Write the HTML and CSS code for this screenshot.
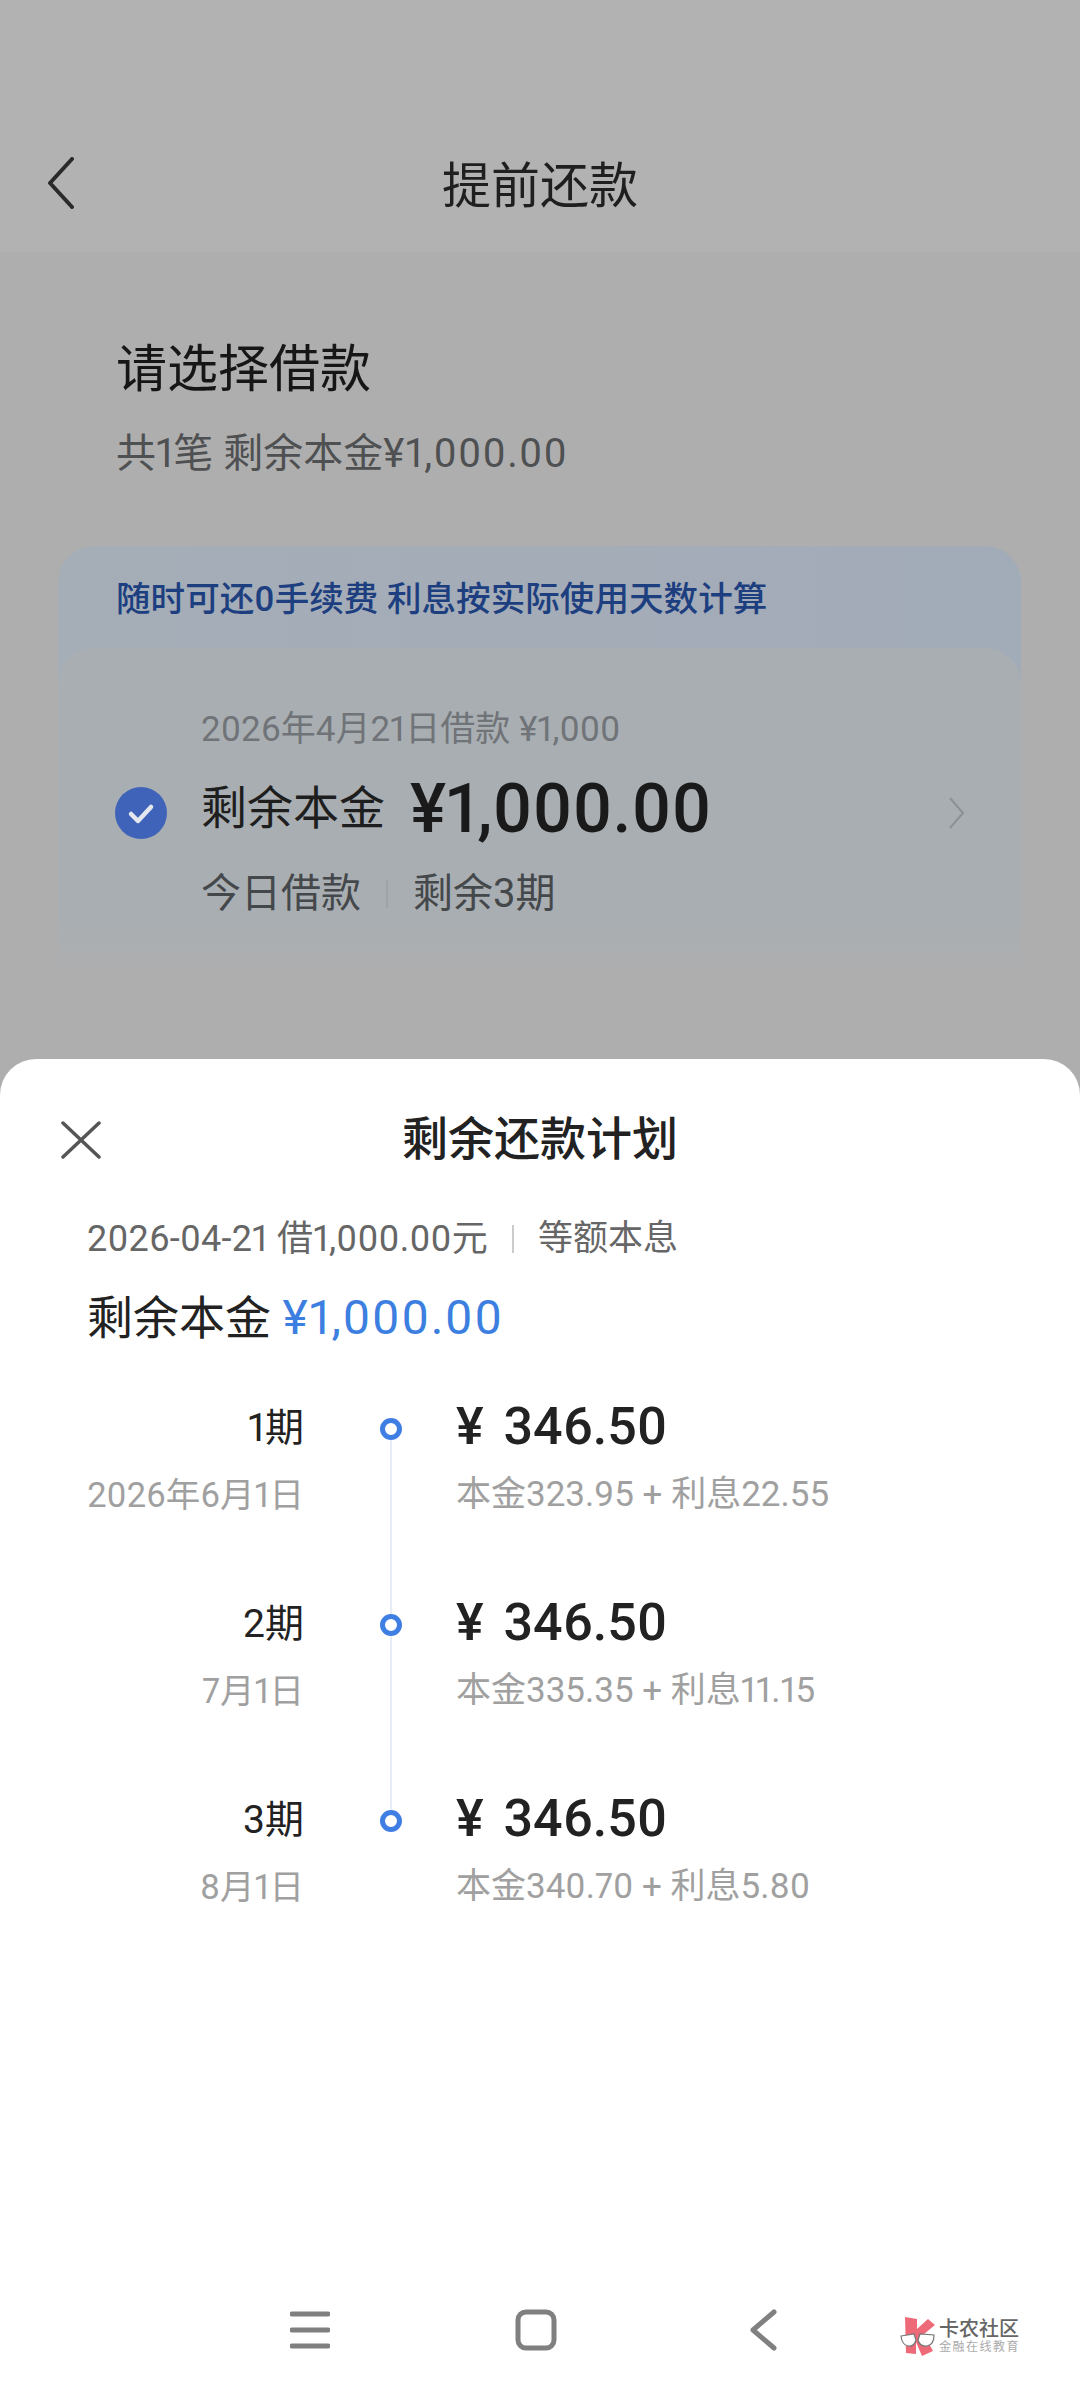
FILE: index.html
```html
<!DOCTYPE html>
<html lang="zh-CN">
<head>
    <meta charset="UTF-8">
    <meta name="viewport" content="width=device-width, initial-scale=1.0">
    <title>提前还款</title>
    <link rel="stylesheet" href="styles.css">
</head>
<body>
    <div class="page">
        <div class="header">
            <svg class="back-icon" width="30" height="52" viewBox="0 0 30 52"><path d="M26 2 L4 26 L26 50" fill="none" stroke="#2a2a2a" stroke-width="4" stroke-linecap="round" stroke-linejoin="round"/></svg>
            <h1>提前还款</h1>
        </div>

        <div class="intro">
            <h2>请选择借款</h2>
            <p>共1笔 剩余本金<span class="intro-amount">¥1,000.00</span></p>
        </div>

        <div class="loan-box">
            <div class="notice">随时可还0手续费 利息按实际使用天数计算</div>
            <div class="loan-card">
                <div class="check">
                    <svg width="52" height="52" viewBox="0 0 52 52"><circle cx="26" cy="26" r="26" fill="#3f63b9"/><path d="M16 27 L23 34 L36 20" fill="none" stroke="#e4e8ee" stroke-width="4.5" stroke-linecap="round" stroke-linejoin="round"/></svg>
                </div>
                <div class="loan-info">
                    <div class="loan-date">2026年4月21日借款 ¥1,000</div>
                    <div class="loan-main">
                        <span class="loan-label">剩余本金</span>
                        <span class="loan-amount">¥1,000.00</span>
                    </div>
                    <div class="loan-meta">
                        <span>今日借款</span>
                        <i class="loan-sep"></i>
                        <span>剩余3期</span>
                    </div>
                </div>
                <svg class="loan-arrow" width="18" height="34" viewBox="0 0 18 34"><path d="M2 2 L15 17 L2 32" fill="none" stroke="#8d9094" stroke-width="2"/></svg>
            </div>
        </div>

        <div class="sheet">
            <div class="sheet-head">
                <svg class="close-icon" width="40" height="38" viewBox="0 0 40 38"><path d="M2 2 L38 36 M38 2 L2 36" fill="none" stroke="#555" stroke-width="3.5" stroke-linecap="round"/></svg>
                <h3>剩余还款计划</h3>
            </div>
            <div class="sheet-sub">
                <span class="sub-date">2026-04-21 借1,000.00元</span>
                <i class="sub-sep"></i>
                <span>等额本息</span>
            </div>
            <div class="sheet-total">剩余本金 <span class="total-amount">¥1,000.00</span></div>

            <div class="plan">
                <div class="plan-row">
                    <div class="plan-left">
                        <div class="plan-no">1期</div>
                        <div class="plan-date">2026年6月1日</div>
                    </div>
                    <div class="plan-mid">
                        <div class="plan-dot"></div>
                        <div class="plan-line"></div>
                    </div>
                    <div class="plan-right">
                        <div class="plan-money">¥ 346.50</div>
                        <div class="plan-detail">本金323.95 + 利息22.55</div>
                    </div>
                </div>
                <div class="plan-row">
                    <div class="plan-left">
                        <div class="plan-no">2期</div>
                        <div class="plan-date">7月1日</div>
                    </div>
                    <div class="plan-mid">
                        <div class="plan-dot"></div>
                        <div class="plan-line"></div>
                    </div>
                    <div class="plan-right">
                        <div class="plan-money">¥ 346.50</div>
                        <div class="plan-detail">本金335.35 + 利息11.15</div>
                    </div>
                </div>
                <div class="plan-row">
                    <div class="plan-left">
                        <div class="plan-no">3期</div>
                        <div class="plan-date">8月1日</div>
                    </div>
                    <div class="plan-mid">
                        <div class="plan-dot"></div>
                    </div>
                    <div class="plan-right">
                        <div class="plan-money">¥ 346.50</div>
                        <div class="plan-detail">本金340.70 + 利息5.80</div>
                    </div>
                </div>
            </div>

            <div class="navbar">
                <svg width="40" height="38" viewBox="0 0 40 38"><path d="M2 3 H38 M2 19 H38 M2 35 H38" stroke="#808080" stroke-width="5" stroke-linecap="round"/></svg>
                <svg width="42" height="42" viewBox="0 0 42 42"><rect x="3" y="3" width="36" height="36" rx="8" fill="none" stroke="#808080" stroke-width="5"/></svg>
                <svg width="28" height="42" viewBox="0 0 28 42"><path d="M25 3 L4 21 L25 39" fill="none" stroke="#808080" stroke-width="5" stroke-linecap="round" stroke-linejoin="round"/></svg>
            </div>

            <div class="watermark">
                <svg width="38" height="40" viewBox="0 0 38 40">
                    <path d="M5 1 L17 3 L17 13 L28 3 L35 9 L24 18 L33 35 L22 40 L16 26 L16 38 L6 37 Z" fill="#ee6a78"/>
                    <path d="M1 20 L14 18 L16 24 Q14 31 8 30 Q2 29 1 20 Z M18 24 L20 18 L34 19 Q34 29 27 30 Q20 31 18 24 Z" fill="#fff" stroke="#777" stroke-width="1.2"/>
                </svg>
                <div class="wm-text">
                    <div class="wm-name">卡农社区</div>
                    <div class="wm-slogan">金融在线教育</div>
                </div>
            </div>
        </div>
    </div>
</body>
</html>
```

FILE: styles.css
```css
* {
    margin: 0;
    padding: 0;
    box-sizing: border-box;
}

body {
    font-family: Roboto, 'Noto Sans CJK SC', sans-serif;
    font-feature-settings: "pnum";
    background: #aeaeae;
}

.page {
    width: 1080px;
    height: 2400px;
    display: flex;
    flex-direction: column;
    overflow: hidden;
}

.header {
    height: 252px;
    padding: 157px 0 0 46px;
    background: #b2b2b2;
    position: relative;
}

.back-icon {
    display: block;
}

.header h1 {
    position: absolute;
    top: 153px;
    left: 0;
    width: 100%;
    text-align: center;
    font-size: 49px;
    line-height: 68px;
    font-weight: 400;
    color: #1f1f1f;
}

.intro {
    padding: 83px 0 0 116px;
}

.intro h2 {
    font-size: 51px;
    line-height: 70px;
    font-weight: 400;
    color: #161616;
}

.intro p {
    margin-top: 22px;
    font-size: 40px;
    line-height: 54px;
    color: #4f5052;
}

.intro-amount {
    letter-spacing: 1.3px;
}

.loan-box {
    margin: 65px 59px 0 58px;
    border-radius: 36px 36px 0 0;
    background: linear-gradient(90deg, #a5adb7, #a2abb8);
}

.notice {
    height: 102px;
    padding: 30px 0 0 58px;
    font-size: 34.6px;
    line-height: 46px;
    font-weight: 500;
    color: #1d3f80;
}

.loan-card {
    height: 320px;
    margin-bottom: -2px;
    padding: 58px 55px 0 58px;
    border-radius: 36px 36px 0 0;
    background: linear-gradient(180deg, #a9aeb3 0%, #a9aeb2 85%, #adaeaf 100%);
    display: flex;
    align-items: flex-start;
}

.check {
    margin-top: 81px;
    width: 86px;
    margin-left: -1px;
    flex-shrink: 0;
}

.check svg {
    display: block;
}

.loan-info {
    flex: 1;
}

.loan-date {
    font-size: 35px;
    line-height: 48px;
    color: #707478;
}

.loan-main {
    margin-top: 10px;
    display: flex;
    align-items: center;
    height: 90px;
}

.loan-label {
    margin-bottom: 10px;
    font-size: 46px;
    color: #1e1e1e;
}

.loan-amount {
    margin-left: 25px;
    font-size: 68px;
    font-weight: 500;
    color: #1a1a1a;
}

.loan-meta {
    margin-top: 13px;
    display: flex;
    align-items: center;
    font-size: 40px;
    line-height: 54px;
    color: #45484b;
}

.loan-sep {
    width: 2px;
    height: 28px;
    margin: 0 25px;
    background: #9fa3a7;
}

.loan-arrow {
    margin-top: 90px;
    flex-shrink: 0;
}

.sheet {
    flex: 1;
    margin-top: 93px;
    background: #fff;
    border-radius: 36px 36px 0 0;
    display: flex;
    flex-direction: column;
    position: relative;
}

.sheet-head {
    height: 90px;
    margin-top: 35px;
    padding: 27px 0 0 61px;
    position: relative;
}

.close-icon {
    display: block;
}

.sheet-head h3 {
    position: absolute;
    top: 13px;
    left: 0;
    width: 100%;
    text-align: center;
    font-size: 46px;
    line-height: 64px;
    font-weight: 500;
    color: #222;
}

.sheet-sub {
    margin-top: 30px;
    padding-left: 87px;
    display: flex;
    align-items: center;
    font-size: 35px;
    line-height: 50px;
    color: #666;
}

.sub-date {
    font-size: 36px;
    letter-spacing: 0.2px;
}

.sub-sep {
    width: 2px;
    height: 28px;
    margin: 0 24px;
    background: #ccc;
}

.sheet-total {
    margin-top: 22px;
    padding-left: 87px;
    font-size: 46px;
    line-height: 64px;
    color: #222;
}

.total-amount {
    font-size: 48px;
    letter-spacing: 1.5px;
    color: #3d7fe0;
}

.plan {
    margin-top: 49px;
}

.plan-row {
    height: 196px;
    display: flex;
}

.plan-left {
    width: 304px;
    text-align: right;
}

.plan-no {
    font-size: 39px;
    line-height: 58px;
    color: #222;
}

.plan-date {
    margin-top: 13px;
    font-size: 34.5px;
    line-height: 50px;
    color: #a0a0a0;
}

.plan-mid {
    width: 152px;
    padding: 19px 0 0 76px;
    display: flex;
    flex-direction: column;
}

.plan-dot {
    width: 22px;
    height: 22px;
    border: 5px solid #3f7fe3;
    border-radius: 50%;
    flex-shrink: 0;
}

.plan-line {
    flex: 1;
    width: 2px;
    margin: 0 0 -19px 10px;
    background: #e6edf7;
}

.plan-right {
    flex: 1;
}

.plan-money {
    font-size: 52px;
    line-height: 56px;
    font-weight: 500;
    word-spacing: 7px;
    color: #222;
}

.plan-detail {
    margin-top: 15px;
    font-size: 35px;
    line-height: 50px;
    color: #a0a0a0;
}

.navbar {
    margin-top: auto;
    height: 92px;
    padding: 0 0 48px 290px;
    display: flex;
    align-items: center;
}

.navbar svg:nth-child(2) {
    margin-left: 185px;
}

.navbar svg:nth-child(3) {
    margin-left: 192px;
}

.watermark {
    position: absolute;
    left: 900px;
    top: 1257px;
    display: flex;
    align-items: center;
    gap: 1px;
}

.wm-name {
    font-size: 20px;
    line-height: 22px;
    font-weight: 500;
    color: #666;
}

.wm-slogan {
    font-size: 12px;
    line-height: 14px;
    letter-spacing: 1.5px;
    color: #aaa;
}
```
